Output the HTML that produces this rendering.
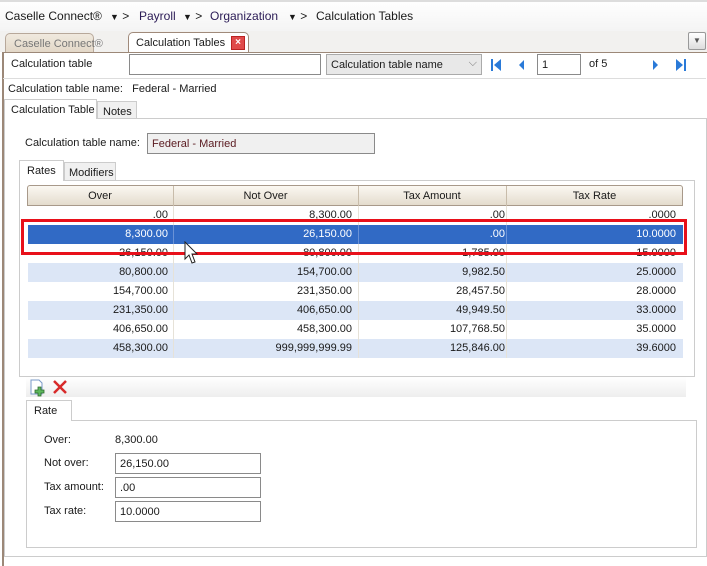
<!DOCTYPE html>
<html><head><style>
body{margin:0;width:707px;height:565px;position:relative;overflow:hidden;font-family:"Liberation Sans",sans-serif;font-size:11px;color:#1a1a1a;background:#fff}
.a{position:absolute;white-space:nowrap}
.inp{position:absolute;border:1px solid #8a8a8a;background:#fff;box-sizing:border-box;padding:3px 4px 0}
.row{position:absolute;left:28px;width:655px;height:19px}
.row div{position:absolute;top:3px;text-align:right}
.c1{left:0;width:140px}.c2{left:146px;width:178px}.c3{left:331px;width:146px}.c4{left:479px;width:169px}
.vl{position:absolute;top:0;width:1px;height:19px;background:#e6e2d8}
</style></head><body>
<div class="a" style="left:0;top:0;width:707px;height:31px;background:linear-gradient(#fff,#f4f4f4)"></div>
<div class="a" style="left:0;top:0;width:707px;height:2px;background:#ddd"></div>
<div class="a" style="left:5px;top:9px;font-size:12px">Caselle Connect®</div>
<div class="a" style="left:110px;top:9px;font-size:12px"><span style="font-size:9px">▼</span>&nbsp;&gt;</div>
<div class="a" style="left:139px;top:9px;font-size:12px;color:#2a1a55">Payroll</div>
<div class="a" style="left:136px;top:9px;font-size:12px;left:136px;display:none"></div>
<div class="a" style="left:136px;top:9px;font-size:12px;left:136px"></div>
<div class="a" style="left:136px;top:9px;font-size:12px;left:136px"></div>
<div class="a" style="left:136px;top:9px;font-size:12px;left:136px"></div>
<div class="a" style="left:136px;top:9px;font-size:12px;left:136px"></div>
<div class="a" style="left:136px;top:9px;font-size:12px;left:136px"></div>
<div class="a" style="left:136px;top:9px;font-size:12px;left:136px"></div>
<div class="a" style="left:136px;top:9px;font-size:12px;left:136px"></div>
<div class="a" style="left:136px;top:9px;font-size:12px;left:136px"></div>
<div class="a" style="left:136px;top:9px;font-size:12px;left:136px"></div>
<div class="a" style="left:136px;top:9px;font-size:12px;left:136px"></div>
<div class="a" style="left:136px;top:9px;font-size:12px;left:136px"></div>
<div class="a" style="left:136px;top:9px;font-size:12px;left:136px"></div>
<div class="a" style="left:136px;top:9px;font-size:12px;left:136px"></div>
<div class="a" style="left:136px;top:9px;font-size:12px;left:136px"></div>
<div class="a" style="left:136px;top:9px;font-size:12px;left:136px"></div>
<div class="a" style="left:136px;top:9px;font-size:12px;left:136px"></div>
<div class="a" style="left:136px;top:9px;font-size:12px;left:136px"></div>
<div class="a" style="left:136px;top:9px;font-size:12px;left:136px"></div>
<div class="a" style="left:136px;top:9px;font-size:12px;left:136px"></div>
<div class="a" style="left:136px;top:9px;font-size:12px;left:136px"></div>
<div class="a" style="left:136px;top:9px;font-size:12px;left:136px"></div>
<div class="a" style="left:136px;top:9px;font-size:12px;left:136px"></div>
<div class="a" style="left:136px;top:9px;font-size:12px;left:136px"></div>
<div class="a" style="left:136px;top:9px;font-size:12px;left:136px"></div>
<div class="a" style="left:136px;top:9px;font-size:12px;left:136px"></div>
<div class="a" style="left:136px;top:9px;font-size:12px;left:136px"></div>
<div class="a" style="left:136px;top:9px;font-size:12px;left:136px"></div>
<div class="a" style="left:136px;top:9px;font-size:12px;left:136px"></div>
<div class="a" style="left:136px;top:9px;font-size:12px;left:136px"></div>
<div class="a" style="left:136px;top:9px;font-size:12px;left:136px"></div>
<div class="a" style="left:136px;top:9px;font-size:12px;left:136px"></div>
<div class="a" style="left:136px;top:9px;font-size:12px;left:136px"></div>
<div class="a" style="left:136px;top:9px;font-size:12px;left:136px"></div>
<div class="a" style="left:136px;top:9px;font-size:12px;left:136px"></div>
<div class="a" style="left:136px;top:9px;font-size:12px;left:136px"></div>
<div class="a" style="left:136px;top:9px;font-size:12px;left:136px"></div>
<div class="a" style="left:136px;top:9px;font-size:12px;left:136px"></div>
<div class="a" style="left:136px;top:9px;font-size:12px;left:136px"></div>
<div class="a" style="left:136px;top:9px;font-size:12px;left:136px"></div>
<div class="a" style="left:136px;top:9px;font-size:12px;left:136px"></div>
<div class="a" style="left:136px;top:9px;font-size:12px;left:136px"></div>
<div class="a" style="left:136px;top:9px;font-size:12px;left:136px"></div>
<div class="a" style="left:136px;top:9px;font-size:12px;left:136px"></div>
<div class="a" style="left:136px;top:9px;font-size:12px;left:136px"></div>
<div class="a" style="left:136px;top:9px;font-size:12px;left:136px"></div>
<div class="a" style="left:136px;top:9px;font-size:12px;left:136px"></div>
<div class="a" style="left:136px;top:9px;font-size:12px;left:136px"></div>
<div class="a" style="left:136px;top:9px;font-size:12px;left:136px"></div>
<div class="a" style="left:136px;top:9px;font-size:12px;left:136px"></div>
<div class="a" style="left:136px;top:9px;font-size:12px;left:136px"></div>
<div class="a" style="left:136px;top:9px;font-size:12px;left:136px"></div>
<div class="a" style="left:136px;top:9px;font-size:12px;left:136px"></div>
<div class="a" style="left:136px;top:9px;font-size:12px;left:136px"></div>
<div class="a" style="left:136px;top:9px;font-size:12px;left:136px"></div>
<div class="a" style="left:136px;top:9px;font-size:12px;left:136px"></div>
<div class="a" style="left:136px;top:9px;font-size:12px;left:136px"></div>
<div class="a" style="left:136px;top:9px;font-size:12px;left:136px"></div>
<div class="a" style="left:136px;top:9px;font-size:12px;left:136px"></div>
<div class="a" style="left:136px;top:9px;font-size:12px;left:136px"></div>
<div class="a" style="left:136px;top:9px;font-size:12px;left:136px"></div>
<div class="a" style="left:136px;top:9px;font-size:12px;left:136px"></div>
<div class="a" style="left:136px;top:9px;font-size:12px;left:136px"></div>
<div class="a" style="left:136px;top:9px;font-size:12px;left:136px"></div>
<div class="a" style="left:136px;top:9px;font-size:12px;left:136px"></div>
<div class="a" style="left:136px;top:9px;font-size:12px;left:136px"></div>
<div class="a" style="left:136px;top:9px;font-size:12px;left:136px"></div>
<div class="a" style="left:136px;top:9px;font-size:12px;left:136px"></div>
<div class="a" style="left:136px;top:9px;font-size:12px;left:136px"></div>
<div class="a" style="left:136px;top:9px;font-size:12px;left:136px"></div>
<div class="a" style="left:136px;top:9px;font-size:12px;left:136px"></div>
<div class="a" style="left:136px;top:9px;font-size:12px;left:136px"></div>
<div class="a" style="left:136px;top:9px;font-size:12px;left:136px"></div>
<div class="a" style="left:136px;top:9px;font-size:12px;left:136px"></div>
<div class="a" style="left:136px;top:9px;font-size:12px;left:136px"></div>
<div class="a" style="left:136px;top:9px;font-size:12px;left:136px"></div>
<div class="a" style="left:136px;top:9px;font-size:12px;left:136px"></div>
<div class="a" style="left:136px;top:9px;font-size:12px;left:136px"></div>
<div class="a" style="left:136px;top:9px;font-size:12px;left:136px"></div>
<div class="a" style="left:136px;top:9px;font-size:12px;left:136px"></div>
<div class="a" style="left:136px;top:9px;font-size:12px;left:136px"></div>
<div class="a" style="left:136px;top:9px;font-size:12px;left:136px"></div>
<div class="a" style="left:136px;top:9px;font-size:12px;left:136px"></div>
<div class="a" style="left:136px;top:9px;font-size:12px;left:136px"></div>
<div class="a" style="left:136px;top:9px;font-size:12px;left:136px"></div>
<div class="a" style="left:136px;top:9px;font-size:12px;left:136px"></div>
<div class="a" style="left:136px;top:9px;font-size:12px;left:136px"></div>
<div class="a" style="left:136px;top:9px;font-size:12px;left:136px"></div>
<div class="a" style="left:136px;top:9px;font-size:12px;left:136px"></div>
<div class="a" style="left:136px;top:9px;font-size:12px;left:136px"></div>
<div class="a" style="left:136px;top:9px;font-size:12px;left:136px"></div>
<div class="a" style="left:136px;top:9px;font-size:12px;left:136px"></div>
<div class="a" style="left:136px;top:9px;font-size:12px;left:136px"></div>
<div class="a" style="left:136px;top:9px;font-size:12px;left:136px"></div>
<div class="a" style="left:136px;top:9px;font-size:12px;left:136px"></div>
<div class="a" style="left:136px;top:9px;font-size:12px;left:136px"></div>
<div class="a" style="left:136px;top:9px;font-size:12px;left:136px"></div>
<div class="a" style="left:136px;top:9px;font-size:12px;left:136px"></div>
<div class="a" style="left:136px;top:9px;font-size:12px;left:136px"></div>
<div class="a" style="left:136px;top:9px;font-size:12px;left:136px"></div>
<div class="a" style="left:136px;top:9px;font-size:12px;left:136px"></div>
<div class="a" style="left:136px;top:9px;font-size:12px;left:136px"></div>
<div class="a" style="left:136px;top:9px;font-size:12px;left:136px"></div>
<div class="a" style="left:136px;top:9px;font-size:12px;left:136px"></div>
<div class="a" style="left:136px;top:9px;font-size:12px;left:136px"></div>
<div class="a" style="left:136px;top:9px;font-size:12px;left:136px"></div>
<div class="a" style="left:136px;top:9px;font-size:12px;left:136px"></div>
<div class="a" style="left:136px;top:9px;font-size:12px;left:136px"></div>
<div class="a" style="left:136px;top:9px;font-size:12px;left:136px"></div>
<div class="a" style="left:136px;top:9px;font-size:12px;left:136px"></div>
<div class="a" style="left:136px;top:9px;font-size:12px;left:136px"></div>
<div class="a" style="left:136px;top:9px;font-size:12px;left:136px"></div>
<div class="a" style="left:136px;top:9px;font-size:12px;left:136px"></div>
<div class="a" style="left:136px;top:9px;font-size:12px;left:136px"></div>
<div class="a" style="left:183px;top:9px;font-size:12px"><span style="font-size:9px">▼</span>&nbsp;&gt;</div>
<div class="a" style="left:210px;top:9px;font-size:12px;color:#2a1a55">Organization</div>
<div class="a" style="left:288px;top:9px;font-size:12px"><span style="font-size:9px">▼</span>&nbsp;&gt;</div>
<div class="a" style="left:316px;top:9px;font-size:12px">Calculation Tables</div>
<div class="a" style="left:0;top:31px;width:707px;height:21px;background:#f2f1ef"></div>
<div class="a" style="left:5px;top:33px;width:89px;height:19px;border:1px solid #b7a89a;border-bottom:none;border-radius:5px 5px 0 0;background:linear-gradient(#f0e9de,#e3d8c8);color:#777;padding:4px 0 0 8px;box-sizing:border-box">Caselle Connect®</div>
<div class="a" style="left:128px;top:32px;width:121px;height:21px;border:1px solid #a08a7a;border-bottom:none;border-radius:5px 5px 0 0;background:#fff;padding:4px 0 0 7px;box-sizing:border-box">Calculation Tables</div>
<div class="a" style="left:231px;top:36px;width:12px;height:12px;background:#e04a4a;border:1px solid #b22;color:#fff;font-size:10px;line-height:12px;text-align:center;font-weight:bold">×</div>
<div class="a" style="left:688px;top:32px;width:16px;height:16px;border:1px solid #999;border-radius:2px;background:linear-gradient(#fff,#ddd);font-size:8px;text-align:center;line-height:16px;color:#555">▼</div>
<div class="a" style="left:2px;top:52px;width:703px;height:513px;border-left:2px solid #9c8878;border-top:1px solid #9c8878;border-right:1px solid #ccc"></div>
<div class="a" style="left:11px;top:58px">Calculation table</div>
<div class="inp" style="left:129px;top:54px;width:192px;height:21px"></div>
<div class="inp" style="left:326px;top:54px;width:156px;height:21px;background:#e8e8e8;border-color:#aaa;padding-top:4px">Calculation table name<span style="position:absolute;right:4px;top:2px;color:#777">⌵</span></div>
<svg class="a" style="left:489px;top:58px" width="14" height="14"><rect x="2" y="1" width="2" height="12" fill="#2a7ad8"/><path d="M12 1 L5 7 L12 13Z" fill="#2a7ad8"/></svg>
<svg class="a" style="left:515px;top:58px" width="12" height="14"><path d="M9 2 L4 7 L9 12Z" fill="#2a7ad8"/></svg>
<div class="inp" style="left:537px;top:54px;width:44px;height:21px;padding-top:4px">1</div>
<div class="a" style="left:589px;top:58px">of 5</div>
<svg class="a" style="left:650px;top:58px" width="12" height="14"><path d="M3 2 L8 7 L3 12Z" fill="#2a7ad8"/></svg>
<svg class="a" style="left:674px;top:58px" width="14" height="14"><path d="M2 1 L9 7 L2 13Z" fill="#2a7ad8"/><rect x="10" y="1" width="2" height="12" fill="#2a7ad8"/></svg>
<div class="a" style="left:3px;top:78px;width:703px;height:1px;background:#ddd"></div>
<div class="a" style="left:8px;top:83px">Calculation table name:&nbsp;&nbsp;&nbsp;Federal - Married</div>
<div class="a" style="left:4px;top:118px;width:701px;height:437px;border:1px solid #ccc"></div>
<div class="a" style="left:4px;top:99px;width:93px;height:20px;background:#fff;border:1px solid #ccc;border-bottom:none;padding:4px 0 0 6px;box-sizing:border-box">Calculation Table</div>
<div class="a" style="left:97px;top:101px;width:40px;height:17px;background:#f0f0f0;border:1px solid #ccc;border-bottom:none;padding:4px 0 0 5px;box-sizing:border-box">Notes</div>
<div class="a" style="left:25px;top:137px">Calculation table name:</div>
<div class="inp" style="left:147px;top:133px;width:228px;height:21px;background:#f0f0f0;color:#5a1a20;padding-top:4px">Federal - Married</div>
<div class="a" style="left:19px;top:180px;width:674px;height:195px;border:1px solid #ccc"></div>
<div class="a" style="left:19px;top:160px;width:45px;height:21px;background:#fff;border:1px solid #ccc;border-bottom:none;padding:4px 0 0 7px;box-sizing:border-box">Rates</div>
<div class="a" style="left:64px;top:162px;width:52px;height:18px;background:#f0f0f0;border:1px solid #ccc;border-bottom:none;padding:4px 0 0 4px;box-sizing:border-box">Modifiers</div>
<div class="a" style="left:27px;top:185px;width:656px;height:21px;border:1px solid #a8998a;border-radius:3px 3px 0 0;background:linear-gradient(#fbf8f2,#e4dccd);box-sizing:border-box"></div>
<div class="a" style="left:27px;top:190px;width:146px;text-align:center">Over</div>
<div class="a" style="left:173px;top:190px;width:185px;text-align:center">Not Over</div>
<div class="a" style="left:358px;top:190px;width:148px;text-align:center">Tax Amount</div>
<div class="a" style="left:506px;top:190px;width:177px;text-align:center">Tax Rate</div>
<div class="a" style="left:173px;top:186px;width:1px;height:20px;background:#c8bcaa"></div>
<div class="a" style="left:358px;top:186px;width:1px;height:20px;background:#c8bcaa"></div>
<div class="a" style="left:506px;top:186px;width:1px;height:20px;background:#c8bcaa"></div>

<div class="row" style="top:206px"><div class="c1">.00</div><div class="c2">8,300.00</div><div class="c3">.00</div><div class="c4">.0000</div><i class="vl" style="left:145px"></i><i class="vl" style="left:330px"></i><i class="vl" style="left:478px"></i></div>
<div class="row" style="top:225px;background:#316ac5;color:#fff"><div class="c1">8,300.00</div><div class="c2">26,150.00</div><div class="c3">.00</div><div class="c4">10.0000</div><i class="vl" style="left:145px;background:#6a92d6"></i><i class="vl" style="left:330px;background:#6a92d6"></i><i class="vl" style="left:478px;background:#6a92d6"></i></div>
<div class="row" style="top:244px"><div class="c1">26,150.00</div><div class="c2">80,800.00</div><div class="c3">1,785.00</div><div class="c4">15.0000</div><i class="vl" style="left:145px"></i><i class="vl" style="left:330px"></i><i class="vl" style="left:478px"></i></div>
<div class="row" style="top:263px;background:#dce6f6"><div class="c1">80,800.00</div><div class="c2">154,700.00</div><div class="c3">9,982.50</div><div class="c4">25.0000</div><i class="vl" style="left:145px"></i><i class="vl" style="left:330px"></i><i class="vl" style="left:478px"></i></div>
<div class="row" style="top:282px"><div class="c1">154,700.00</div><div class="c2">231,350.00</div><div class="c3">28,457.50</div><div class="c4">28.0000</div><i class="vl" style="left:145px"></i><i class="vl" style="left:330px"></i><i class="vl" style="left:478px"></i></div>
<div class="row" style="top:301px;background:#dce6f6"><div class="c1">231,350.00</div><div class="c2">406,650.00</div><div class="c3">49,949.50</div><div class="c4">33.0000</div><i class="vl" style="left:145px"></i><i class="vl" style="left:330px"></i><i class="vl" style="left:478px"></i></div>
<div class="row" style="top:320px"><div class="c1">406,650.00</div><div class="c2">458,300.00</div><div class="c3">107,768.50</div><div class="c4">35.0000</div><i class="vl" style="left:145px"></i><i class="vl" style="left:330px"></i><i class="vl" style="left:478px"></i></div>
<div class="row" style="top:339px;background:#dce6f6"><div class="c1">458,300.00</div><div class="c2">999,999,999.99</div><div class="c3">125,846.00</div><div class="c4">39.6000</div><i class="vl" style="left:145px"></i><i class="vl" style="left:330px"></i><i class="vl" style="left:478px"></i></div>
<div class="a" style="left:21px;top:219px;width:666px;height:36px;border:3px solid #e8101a;box-sizing:border-box"></div>
<svg class="a" style="left:184px;top:241px" width="18" height="28"><path d="M1 1 L1 18 L5 14 L8 22 L11 21 L8 13 L13 13Z" fill="#fff" stroke="#222" stroke-width="1"/></svg>

<div class="a" style="left:26px;top:377px;width:660px;height:20px;background:linear-gradient(#fff,#eee)"></div>
<svg class="a" style="left:29px;top:379px" width="18" height="18"><path d="M2 1 H10 L13 4 V15 H2Z" fill="#fff" stroke="#7a9ac8"/><path d="M9 8 h3 v3 h3 v3 h-3 v3 h-3 v-3 h-3 v-3 h3z" fill="#5db85d" stroke="#2d6a2d" stroke-width=".8"/></svg>
<svg class="a" style="left:52px;top:379px" width="16" height="16"><path d="M2 2 L14 14 M14 2 L2 14" stroke="#d82a2a" stroke-width="2.5"/></svg>
<div class="a" style="left:26px;top:420px;width:671px;height:128px;border:1px solid #ccc;box-sizing:border-box"></div>
<div class="a" style="left:26px;top:400px;width:46px;height:21px;background:#fff;border:1px solid #ccc;border-bottom:none;padding:4px 0 0 7px;box-sizing:border-box">Rate</div>
<div class="a" style="left:44px;top:434px">Over:</div>
<div class="a" style="left:115px;top:434px">8,300.00</div>
<div class="a" style="left:44px;top:457px">Not over:</div>
<div class="inp" style="left:115px;top:453px;width:146px;height:21px;padding-top:4px">26,150.00</div>
<div class="a" style="left:44px;top:481px">Tax amount:</div>
<div class="inp" style="left:115px;top:477px;width:146px;height:21px;padding-top:4px">.00</div>
<div class="a" style="left:44px;top:505px">Tax rate:</div>
<div class="inp" style="left:115px;top:501px;width:146px;height:21px;padding-top:4px">10.0000</div>
</body></html>
